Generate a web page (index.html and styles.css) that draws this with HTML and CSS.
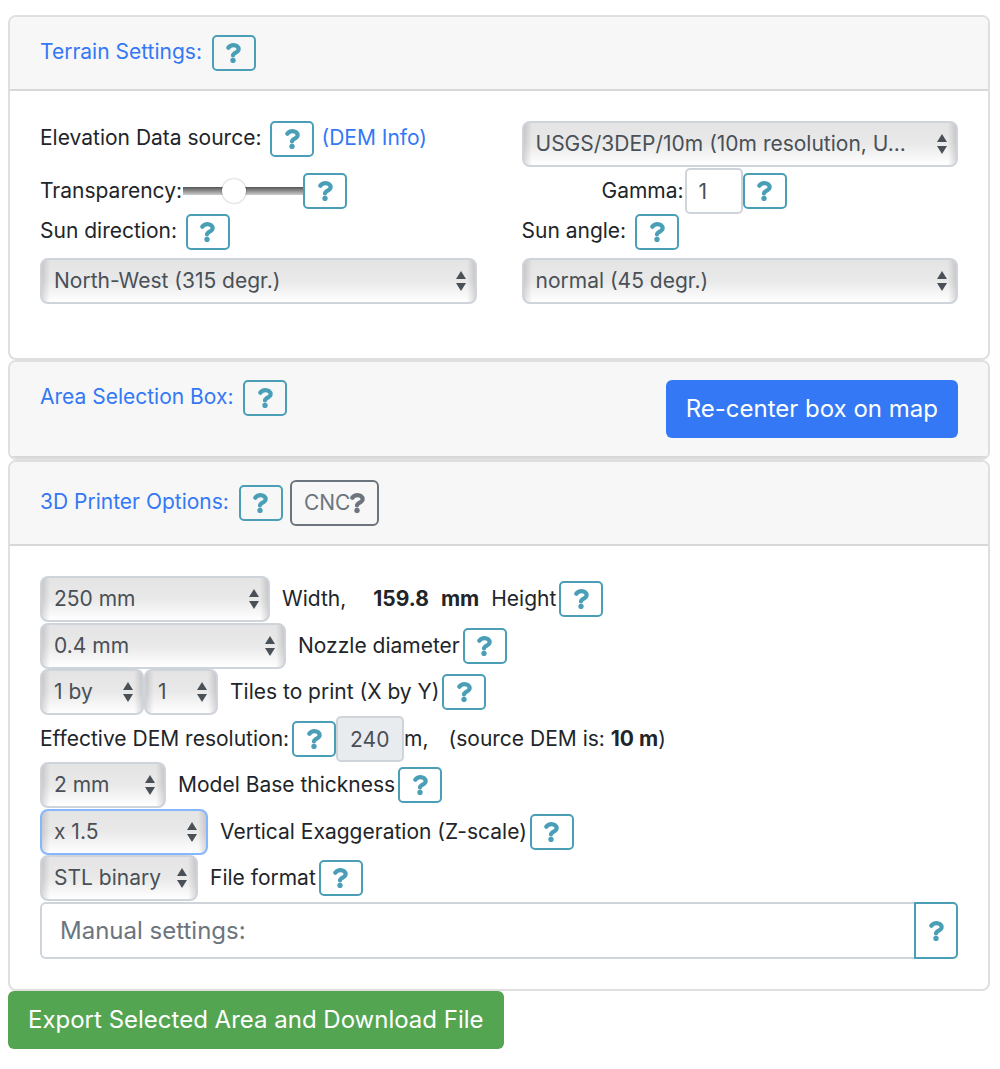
FILE: index.html
```html
<!DOCTYPE html>
<html lang="en">
<head>
<meta charset="utf-8">
<title>Terrain export</title>
<link rel="stylesheet" href="styles.css">
</head>
<body>
<svg class="sprite" aria-hidden="true">
  <symbol id="q" viewBox="0 0 15 20">
    <path d="M2.3 4.7C3.6 2.8 5.2 2.1 7.4 2.1c2.9 0 5.2 1.6 5.2 4.1C12.6 9.6 7.2 9.4 7 12.4" fill="none" stroke="currentColor" stroke-width="4.2" stroke-linecap="round" stroke-linejoin="round"/>
    <circle cx="7" cy="17.4" r="2.7"/>
  </symbol>
</svg>
<form class="page">
  <section class="card">
    <header class="card-header">
      <a class="title" href="#terrain">Terrain Settings:</a>
      <button type="button" class="help" aria-label="Help: terrain settings"><svg class="icon"><use href="#q"/></svg></button>
    </header>
    <div class="card-body terrain" id="terrain">
      <div class="line">
        <label for="dem">Elevation Data source:</label>
        <button type="button" class="help" aria-label="Help: elevation data"><svg class="icon"><use href="#q"/></svg></button>
        <a href="#dem-info">(DEM Info)</a>
      </div>
      <select id="dem" class="select"><option>USGS/3DEP/10m (10m resolution, U...</option></select>
      <div class="line tight">
        <label for="transparency">Transparency:</label>
        <input id="transparency" class="range" type="range" min="0" max="100" value="41">
        <button type="button" class="help" aria-label="Help: transparency"><svg class="icon"><use href="#q"/></svg></button>
      </div>
      <div class="line tight gamma">
        <label for="gamma">Gamma:</label>
        <input id="gamma" class="field w-gamma" type="text" value="1">
        <button type="button" class="help" aria-label="Help: gamma"><svg class="icon"><use href="#q"/></svg></button>
      </div>
      <div class="line">
        <label for="sun-dir">Sun direction:</label>
        <button type="button" class="help" aria-label="Help: sun direction"><svg class="icon"><use href="#q"/></svg></button>
      </div>
      <div class="line">
        <label for="sun-angle">Sun angle:</label>
        <button type="button" class="help" aria-label="Help: sun angle"><svg class="icon"><use href="#q"/></svg></button>
      </div>
      <select id="sun-dir" class="select sun"><option>North-West (315 degr.)</option></select>
      <select id="sun-angle" class="select sun"><option>normal (45 degr.)</option></select>
    </div>
  </section>

  <section class="card">
    <header class="card-header top">
      <a class="title" href="#area">Area Selection Box:</a>
      <button type="button" class="help" aria-label="Help: area selection box"><svg class="icon"><use href="#q"/></svg></button>
      <button type="button" class="btn primary">Re-center box on map</button>
    </header>
  </section>

  <section class="card">
    <header class="card-header">
      <a class="title" href="#printer">3D Printer Options:</a>
      <button type="button" class="help" aria-label="Help: printer options"><svg class="icon"><use href="#q"/></svg></button>
      <button type="button" class="cnc">CNC<svg class="icon"><use href="#q"/></svg></button>
    </header>
    <div class="card-body printer" id="printer">
      <div class="row">
        <select id="width" class="select w-width"><option>250 mm</option></select>
        <label for="width" class="after">Width,</label>
        <b class="height-value"><span>159.8</span><span>mm</span></b>
        <span class="after">Height</span>
        <button type="button" class="help" aria-label="Help: width and height"><svg class="icon"><use href="#q"/></svg></button>
      </div>
      <div class="row">
        <select id="nozzle" class="select w-nozzle"><option>0.4 mm</option></select>
        <label for="nozzle" class="after">Nozzle diameter</label>
        <button type="button" class="help" aria-label="Help: nozzle diameter"><svg class="icon"><use href="#q"/></svg></button>
      </div>
      <div class="row">
        <select id="tiles-x" class="select w-tx" aria-label="Tiles in X"><option>1 by</option></select>
        <select id="tiles-y" class="select w-ty"><option>1</option></select>
        <label for="tiles-y" class="after">Tiles to print (X by Y)</label>
        <button type="button" class="help" aria-label="Help: tiles"><svg class="icon"><use href="#q"/></svg></button>
      </div>
      <div class="row">
        <label for="res">Effective DEM resolution:</label>
        <button type="button" class="help" aria-label="Help: resolution"><svg class="icon"><use href="#q"/></svg></button>
        <input id="res" class="field w-res" type="text" value="240" readonly>
        <span>m,</span>
        <span class="source">(source DEM is: <b>10 m</b>)</span>
      </div>
      <div class="row">
        <select id="base" class="select w-base"><option>2 mm</option></select>
        <label for="base" class="after">Model Base thickness</label>
        <button type="button" class="help" aria-label="Help: base thickness"><svg class="icon"><use href="#q"/></svg></button>
      </div>
      <div class="row">
        <select id="zscale" class="select w-z active"><option>x 1.5</option></select>
        <label for="zscale" class="after">Vertical Exaggeration (Z-scale)</label>
        <button type="button" class="help" aria-label="Help: vertical exaggeration"><svg class="icon"><use href="#q"/></svg></button>
      </div>
      <div class="row">
        <select id="format" class="select w-format"><option>STL binary</option></select>
        <label for="format" class="after">File format</label>
        <button type="button" class="help" aria-label="Help: file format"><svg class="icon"><use href="#q"/></svg></button>
      </div>
      <div class="manual">
        <input type="text" class="manual-input" placeholder="Manual settings:" aria-label="Manual settings">
        <button type="button" class="help" aria-label="Help: manual settings"><svg class="icon"><use href="#q"/></svg></button>
      </div>
    </div>
  </section>
  <button type="button" class="btn success">Export Selected Area and Download File</button>
</form>
</body>
</html>
```
FILE: styles.css
```css
* { box-sizing: border-box; }
body {
  margin: 0;
  background: #fff;
  color: #212529;
  font: 21px/34px Inter, "Liberation Sans", sans-serif;
}
a { color: #3478f6; text-decoration: none; }
button, input, select { font: inherit; margin: 0; }
button { cursor: pointer; }
.sprite { display: none; }
.page { padding: 15px 10px 20px 8px; }

.card { border: 2px solid #dfdfdf; border-radius: 8px; overflow: hidden; }
.card-header {
  display: flex;
  align-items: center;
  gap: 7px;
  padding: 18px 30px;
  background: #f7f7f7;
  border-bottom: 2px solid #d8d8d8;
}
.card-header.top { align-items: flex-start; }
.title { margin-right: 3px; padding-bottom: 2px; }
.card-body { padding: 30px; }
.terrain {
  display: grid;
  grid-template-columns: 1fr 1fr;
  column-gap: 45px;
  padding-bottom: 54px;
}
.line { display: flex; align-items: flex-start; gap: 7px; }
.line label { margin-right: 2px; }
.line.tight { align-items: center; gap: 0; margin-top: 1px; }
.line.tight label { margin-right: 1px; }
.line.gamma { padding-left: 80px; }
.sun { margin-top: 8px; }

.help {
  display: flex;
  align-items: center;
  justify-content: center;
  flex: none;
  width: 44px;
  height: 36px;
  padding: 0;
  color: #4a9fb7;
  background: transparent;
  border: 2px solid;
  border-radius: 5px;
}
.icon { width: 15px; height: 20px; fill: currentColor; }
.cnc {
  display: flex;
  align-items: center;
  height: 46px;
  padding: 0 12px;
  color: #6c757d;
  background: transparent;
  border: 2px solid;
  border-radius: 6px;
}

.select {
  appearance: none;
  width: 100%;
  height: 46px;
  padding: 0 28px 0 12px;
  color: #495057;
  border: 2px solid #ced4da;
  border-radius: 8px;
  background:
    url("data:image/svg+xml,%3Csvg xmlns='http://www.w3.org/2000/svg' width='10' height='20'%3E%3Cpath fill='%23495057' d='M0 8 5 0l5 8zM0 12h10l-5 8z'/%3E%3C/svg%3E") right 9px center / 10px 20px no-repeat,
    linear-gradient(90deg, #0002, #0000) left / 8px 100% no-repeat,
    linear-gradient(270deg, #0002, #0000) right / 8px 100% no-repeat,
    linear-gradient(#e4e4e4, #e9e9e9 50%, #fff);
}
.select.active { border-color: #86b7fe; }
.field {
  height: 46px;
  padding: 0 12px;
  color: #495057;
  background: #fff;
  border: 2px solid #ced4da;
  border-radius: 5px;
}
.field[readonly] { background: #e9ecef; }
.range { appearance: none; width: 120px; height: 26px; margin: 0; background: transparent; }
.range::-webkit-slider-runnable-track {
  height: 8px;
  background: linear-gradient(#555, #ccc);
}
.range::-webkit-slider-thumb {
  appearance: none;
  width: 24px;
  height: 24px;
  margin-top: -8px;
  background: #fff;
  border-radius: 50%;
  box-shadow: 0 0 2px #0006;
}

.row { display: flex; align-items: center; height: 46px; }
.row:nth-child(odd) { margin-bottom: 1px; }
.row .select { flex: none; }
.row label { margin-right: 3px; }
.after { margin-left: 12px; }
.height-value { display: flex; gap: 12px; margin-left: 24px; }
.height-value + .after { margin-right: 3px; }
.source { margin-left: 20px; }
.w-gamma { width: 58px; }
.w-res { width: 68px; }
.w-width { width: 230px; }
.w-nozzle { width: 246px; }
.w-tx { width: 104px; }
.w-ty { width: 74px; }
.w-base { width: 126px; }
.w-z { width: 168px; }
.w-format { width: 158px; }

.manual { display: flex; height: 57px; }
.manual-input {
  flex: 1;
  min-width: 0;
  padding: 0 18px;
  font-size: 24px;
  border: 2px solid #ced4da;
  border-right: 0;
  border-radius: 6px 0 0 6px;
}
.manual-input::placeholder { color: #6c757d; }
.manual .help { height: auto; border-radius: 0 5px 5px 0; }

.btn {
  height: 58px;
  padding: 0 20px;
  color: #fff;
  font-size: 24px;
  border: 0;
  border-radius: 6px;
}
.primary { margin-left: auto; background: #3478f6; }
.success { display: block; background: #54a552; }
```
